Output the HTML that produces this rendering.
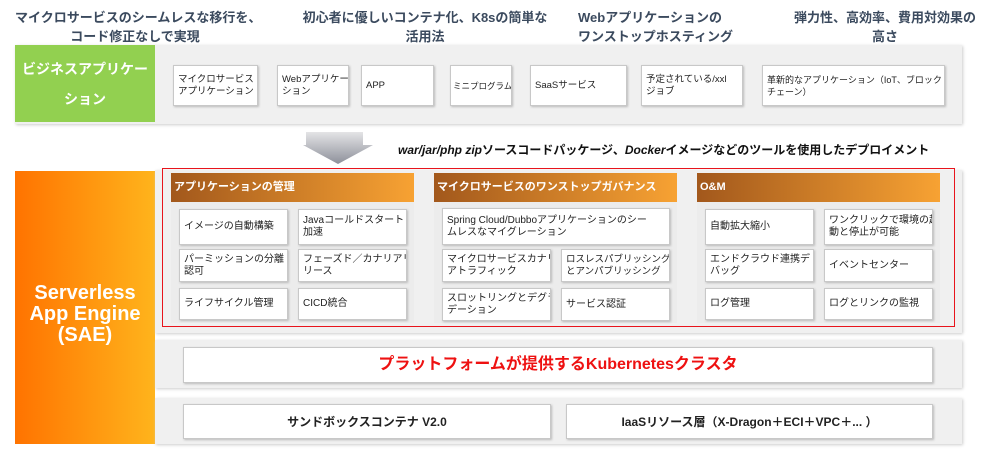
<!DOCTYPE html>
<html><head><meta charset="utf-8"><style>
*{margin:0;padding:0;box-sizing:border-box}
body{width:1000px;height:454px;background:#fff;position:relative;overflow:hidden;font-family:"Liberation Sans","Noto Sans CJK JP",sans-serif}
.a{position:absolute}
.h{color:#3b4a5e;font-weight:bold;font-size:13px;line-height:19px;text-align:center;white-space:nowrap}
.panel{background:#f0f0f0;box-shadow:1px 1px 3px #ccc}
.b{position:absolute;background:#fff;border:1px solid #c8c8c8;box-shadow:1px 1px 2px #bbb;font-size:9.5px;line-height:12px;color:#222;padding:0 4px;display:flex;align-items:center;white-space:nowrap;overflow:hidden}
.g{position:absolute;font-size:10px;line-height:12px}
.hd{position:absolute;height:29px;background:linear-gradient(90deg,#a2581c,#f7a233);color:#fff;font-weight:bold;font-size:11px;line-height:29px;padding-left:3px;white-space:nowrap}
.gb{position:absolute;background:#ececec}
</style></head><body>
<div class="a h" style="left:15px;top:8px;width:240px">マイクロサービスのシームレスな移行を、<br>コード修正なしで実現</div>
<div class="a h" style="left:290px;top:8px;width:270px">初心者に優しいコンテナ化、K8sの簡単な<br>活用法</div>
<div class="a h" style="left:578px;top:8px;width:160px;text-align:left">Webアプリケーションの<br>ワンストップホスティング</div>
<div class="a h" style="left:780px;top:8px;width:210px">弾力性、高効率、費用対効果の<br>高さ</div>

<div class="a panel" style="left:15px;top:45px;width:947px;height:79px"></div>
<div class="a" style="left:15px;top:45px;width:140px;height:77px;background:#92d050;color:#fff;font-weight:bold;font-size:14px;line-height:30px;text-align:center;padding-top:9px;white-space:nowrap">ビジネスアプリケー<br>ション</div>
<div class="b" style="left:173px;top:65px;width:85px;height:41px">マイクロサービス<br>アプリケーション</div>
<div class="b" style="left:277px;top:65px;width:72px;height:41px">Webアプリケー<br>ション</div>
<div class="b" style="left:361px;top:65px;width:73px;height:41px">APP</div>
<div class="b" style="left:450px;top:65px;width:62px;height:41px;font-size:8.5px;padding:0 2px">ミニプログラム</div>
<div class="b" style="left:530px;top:65px;width:97px;height:41px">SaaSサービス</div>
<div class="b" style="left:641px;top:65px;width:102px;height:41px">予定されている/xxl<br>ジョブ</div>
<div class="b" style="left:762px;top:65px;width:183px;height:41px;font-size:9px">革新的なアプリケーション（IoT、ブロック<br>チェーン）</div>

<svg class="a" style="left:303px;top:130px" width="72" height="35"><defs><linearGradient id="ar" x1="0" y1="0" x2="0" y2="1"><stop offset="0" stop-color="#e4e4e6"/><stop offset="1" stop-color="#8d909a"/></linearGradient></defs><path d="M3 2H60V15H70L35 34L0 15H3Z" fill="url(#ar)"/></svg>
<div class="a" style="left:398px;top:141px;font-size:12px;font-weight:bold;color:#111;white-space:nowrap"><i>war/jar/php zip</i>ソースコードパッケージ、<i>Docker</i>イメージなどのツールを使用したデプロイメント</div>

<div class="a" style="left:15px;top:171px;width:140px;height:273px;background:linear-gradient(90deg,#ff7300,#ffb41c);color:#fff;font-weight:bold;font-size:20px;line-height:21px;text-align:center;padding-top:112px">Serverless<br>App Engine<br>(SAE)</div>
<div class="a panel" style="left:155px;top:170px;width:807px;height:163px"></div>
<div class="a" style="left:162px;top:168px;width:793px;height:159px;border:1.5px solid #e8141c"></div>

<div class="gb" style="left:171px;top:202px;width:243px;height:121px"></div>
<div class="gb" style="left:434px;top:202px;width:243px;height:121px"></div>
<div class="gb" style="left:697px;top:202px;width:243px;height:121px"></div>
<div class="hd" style="left:171px;top:173px;width:243px">アプリケーションの管理</div>
<div class="hd" style="left:434px;top:173px;width:243px">マイクロサービスのワンストップガバナンス</div>
<div class="hd" style="left:697px;top:173px;width:243px">O&amp;M</div>

<div class="b g" style="left:179px;top:209px;width:109px;height:36px">イメージの自動構築</div>
<div class="b g" style="left:298px;top:209px;width:109px;height:36px">Javaコールドスタート<br>加速</div>
<div class="b g" style="left:179px;top:249px;width:109px;height:33px">パーミッションの分離・<br>認可</div>
<div class="b g" style="left:298px;top:249px;width:109px;height:33px">フェーズド／カナリアリ<br>リース</div>
<div class="b g" style="left:179px;top:288px;width:109px;height:32px">ライフサイクル管理</div>
<div class="b g" style="left:298px;top:288px;width:109px;height:32px">CICD統合</div>

<div class="b g" style="left:442px;top:208px;width:228px;height:37px">Spring Cloud/Dubboアプリケーションのシー<br>ムレスなマイグレーション</div>
<div class="b g" style="left:442px;top:249px;width:109px;height:33px">マイクロサービスカナリ<br>アトラフィック</div>
<div class="b g" style="left:561px;top:249px;width:109px;height:33px;font-size:9.5px">ロスレスパブリッシング<br>とアンパブリッシング</div>
<div class="b g" style="left:442px;top:288px;width:109px;height:33px">スロットリングとデグラ<br>デーション</div>
<div class="b g" style="left:561px;top:288px;width:109px;height:33px">サービス認証</div>

<div class="b g" style="left:705px;top:209px;width:109px;height:36px">自動拡大縮小</div>
<div class="b g" style="left:824px;top:209px;width:109px;height:36px">ワンクリックで環境の起<br>動と停止が可能</div>
<div class="b g" style="left:705px;top:249px;width:109px;height:33px">エンドクラウド連携デ<br>バッグ</div>
<div class="b g" style="left:824px;top:249px;width:109px;height:33px">イベントセンター</div>
<div class="b g" style="left:705px;top:288px;width:109px;height:32px">ログ管理</div>
<div class="b g" style="left:824px;top:288px;width:109px;height:32px">ログとリンクの監視</div>

<div class="a panel" style="left:155px;top:340px;width:807px;height:48px"></div>
<div class="b" style="left:183px;top:347px;width:750px;height:36px;justify-content:center;color:#ee1111;font-weight:bold;font-size:16px">プラットフォームが提供するKubernetesクラスタ</div>
<div class="a panel" style="left:155px;top:398px;width:807px;height:46px"></div>
<div class="b" style="left:183px;top:404px;width:368px;height:35px;justify-content:center;font-weight:bold;font-size:12px">サンドボックスコンテナ V2.0</div>
<div class="b" style="left:566px;top:404px;width:367px;height:35px;justify-content:center;font-weight:bold;font-size:12px">IaaSリソース層（X-Dragon＋ECI＋VPC＋... ）</div>
</body></html>
